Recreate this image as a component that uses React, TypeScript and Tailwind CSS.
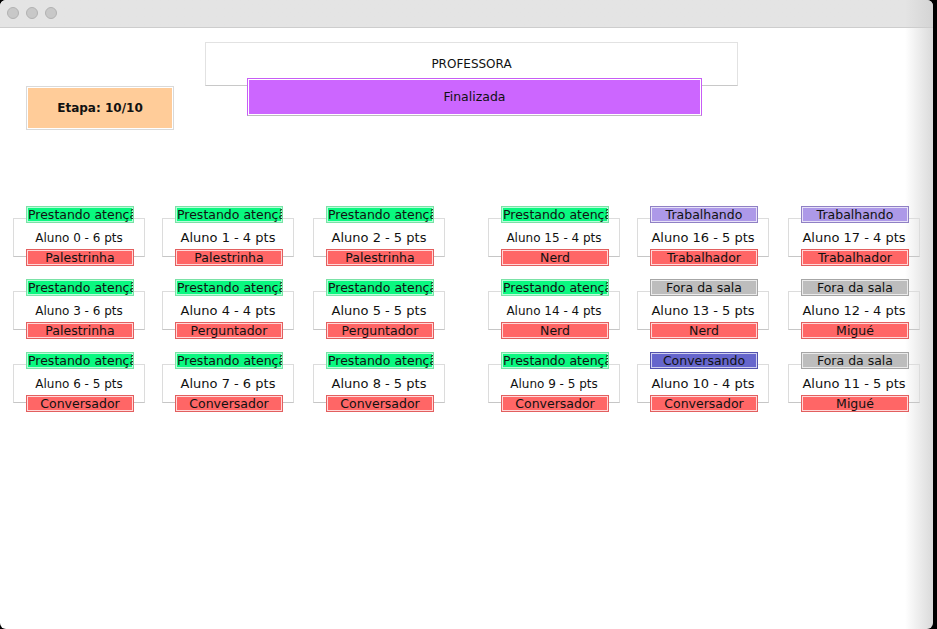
import React from "react";

type Aluno = {
  status: string;
  name: string;
  role: string;
  small?: boolean;
};

const statusStyle: Record<string, string> = {
  "Prestando atenção": "bg-[#0af880] border-[#7ae2a6]",
  Trabalhando: "bg-[#ad99e8] border-[#8f80c4]",
  "Fora da sala": "bg-[#bdbdbd] border-[#a6a6a6]",
  Conversando: "bg-[#6666cc] border-[#5252ad]",
};

const colMargins = ["ml-[13px]", "ml-[17px]", "ml-[19px]", "ml-[43px]", "ml-[17px]", "ml-[19px]"];

const rows: Aluno[][] = [
  [
    { status: "Prestando atenção", name: "Aluno 0 - 6 pts", role: "Palestrinha", small: true },
    { status: "Prestando atenção", name: "Aluno 1 - 4 pts", role: "Palestrinha" },
    { status: "Prestando atenção", name: "Aluno 2 - 5 pts", role: "Palestrinha" },
    { status: "Prestando atenção", name: "Aluno 15 - 4 pts", role: "Nerd", small: true },
    { status: "Trabalhando", name: "Aluno 16 - 5 pts", role: "Trabalhador" },
    { status: "Trabalhando", name: "Aluno 17 - 4 pts", role: "Trabalhador" },
  ],
  [
    { status: "Prestando atenção", name: "Aluno 3 - 6 pts", role: "Palestrinha", small: true },
    { status: "Prestando atenção", name: "Aluno 4 - 4 pts", role: "Perguntador" },
    { status: "Prestando atenção", name: "Aluno 5 - 5 pts", role: "Perguntador" },
    { status: "Prestando atenção", name: "Aluno 14 - 4 pts", role: "Nerd", small: true },
    { status: "Fora da sala", name: "Aluno 13 - 5 pts", role: "Nerd" },
    { status: "Fora da sala", name: "Aluno 12 - 4 pts", role: "Migué" },
  ],
  [
    { status: "Prestando atenção", name: "Aluno 6 - 5 pts", role: "Conversador", small: true },
    { status: "Prestando atenção", name: "Aluno 7 - 6 pts", role: "Conversador" },
    { status: "Prestando atenção", name: "Aluno 8 - 5 pts", role: "Conversador" },
    { status: "Prestando atenção", name: "Aluno 9 - 5 pts", role: "Conversador", small: true },
    { status: "Conversando", name: "Aluno 10 - 4 pts", role: "Conversador" },
    { status: "Fora da sala", name: "Aluno 11 - 5 pts", role: "Migué" },
  ],
];

function AlunoCard({ aluno, margin }: { aluno: Aluno; margin: string }) {
  const clipped = aluno.status === "Prestando atenção";
  return (
    <div className={`flex flex-col w-[132px] ${margin}`}>
      <div
        className={`relative z-10 ml-[13px] w-[108px] h-[17px] border shadow-[inset_0_0_0_1px_rgba(255,255,255,0.7)] overflow-hidden whitespace-nowrap text-[12.5px] leading-[15px] text-[#111] ${
          statusStyle[aluno.status]
        } ${clipped ? "text-left pl-[1px]" : "text-center"}`}
      >
        {aluno.status}
      </div>
      <div
        className={`-mt-[5px] h-[39px] w-[132px] border border-[#dcdcdc] border-b-[#c6c6c6] flex items-center justify-center text-[#111] ${
          aluno.small ? "text-[12px]" : "text-[13px]"
        }`}
      >
        {aluno.name}
      </div>
      <div className="relative z-10 -mt-[8px] ml-[13px] w-[108px] h-[17px] border border-[#e25f5f] bg-[#ff6666] shadow-[inset_0_0_0_1px_rgba(255,255,255,0.75)] text-center text-[12.5px] leading-[15px] text-[#111] whitespace-nowrap overflow-hidden">
        {aluno.role}
      </div>
    </div>
  );
}

export default function App(): JSX.Element {
  return (
    <div className="w-[937px] h-[629px] bg-black overflow-hidden font-['DejaVu_Sans',sans-serif]">
      <div className="w-[933px] h-[629px] rounded-[6px] overflow-hidden flex flex-col bg-linear-to-r from-white from-[97%] to-[#dadada]">
        {/* title bar */}
        <div className="h-[28px] shrink-0 bg-linear-to-r from-[#e4e4e4] from-[97%] to-[#d4d4d4] border-b border-[#cdcdcd] flex items-start gap-[7px] pl-[7px] pt-[7px]">
          <div className="w-[12px] h-[12px] rounded-full bg-[#c8c8c8] border border-[#b2b2b2]" />
          <div className="w-[12px] h-[12px] rounded-full bg-[#c8c8c8] border border-[#b2b2b2]" />
          <div className="w-[12px] h-[12px] rounded-full bg-[#c8c8c8] border border-[#b2b2b2]" />
        </div>

        {/* top section */}
        <div className="flex items-start">
          <div className="ml-[26px] mt-[58px] w-[148px] h-[44px] border border-[#d9d9d9] bg-[#ffcc99] shadow-[inset_0_0_0_1px_#ffffff] flex items-center justify-center text-[12px] font-bold text-[#111]">
            Etapa: 10/10
          </div>
          <div className="ml-[31px] mt-[14px] flex flex-col">
            <div className="w-[533px] h-[44px] border border-[#e2e2e2] border-b-[#c8c8c8] bg-white flex items-center justify-center text-[12px] text-[#111]">
              PROFESSORA
            </div>
            <div className="-mt-[8px] ml-[42px] w-[455px] h-[38px] border border-[#c75cf5] border-b-[#bdbdbd] bg-[#cc66ff] shadow-[inset_0_0_0_1px_#ffffff] flex items-center justify-center text-[12.5px] text-[#111]">
              Finalizada
            </div>
          </div>
        </div>

        {/* alunos */}
        <div className="mt-[76px] flex flex-col gap-[13px]">
          {rows.map((row, r) => (
            <div key={r} className="flex">
              {row.map((aluno, c) => (
                <AlunoCard key={aluno.name} aluno={aluno} margin={colMargins[c]} />
              ))}
            </div>
          ))}
        </div>
      </div>
    </div>
  );
}
